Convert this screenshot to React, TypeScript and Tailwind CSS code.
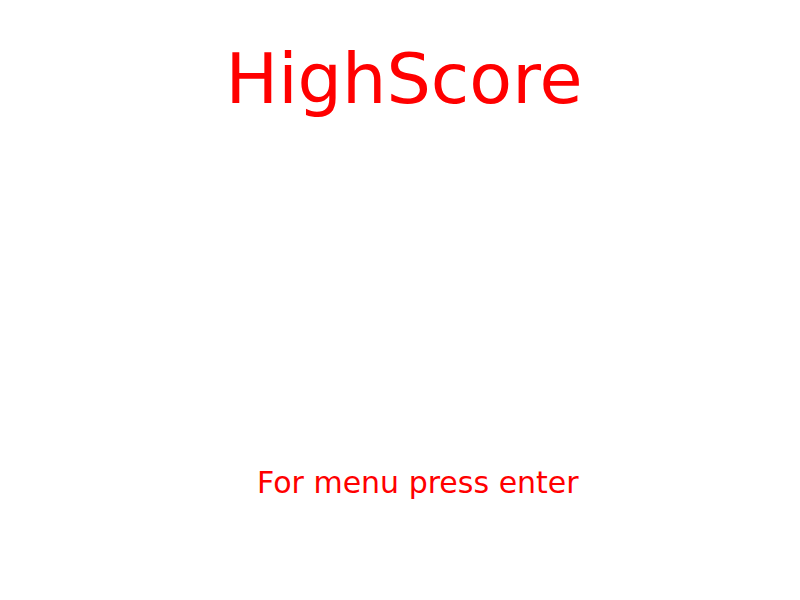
import React from "react";

const App = () => {
  return (
    <div className="flex h-[600px] w-[800px] flex-col bg-white font-['DejaVu_Sans',sans-serif] text-[#ff0000]">
      <h1 className="mt-[44px] pl-[8px] text-center text-[70px] leading-none font-normal">
        HighScore
      </h1>
      <div className="mt-auto mb-[102px] pl-[257px] text-[30px] leading-none">
        For menu press enter
      </div>
    </div>
  );
};

export default App;
